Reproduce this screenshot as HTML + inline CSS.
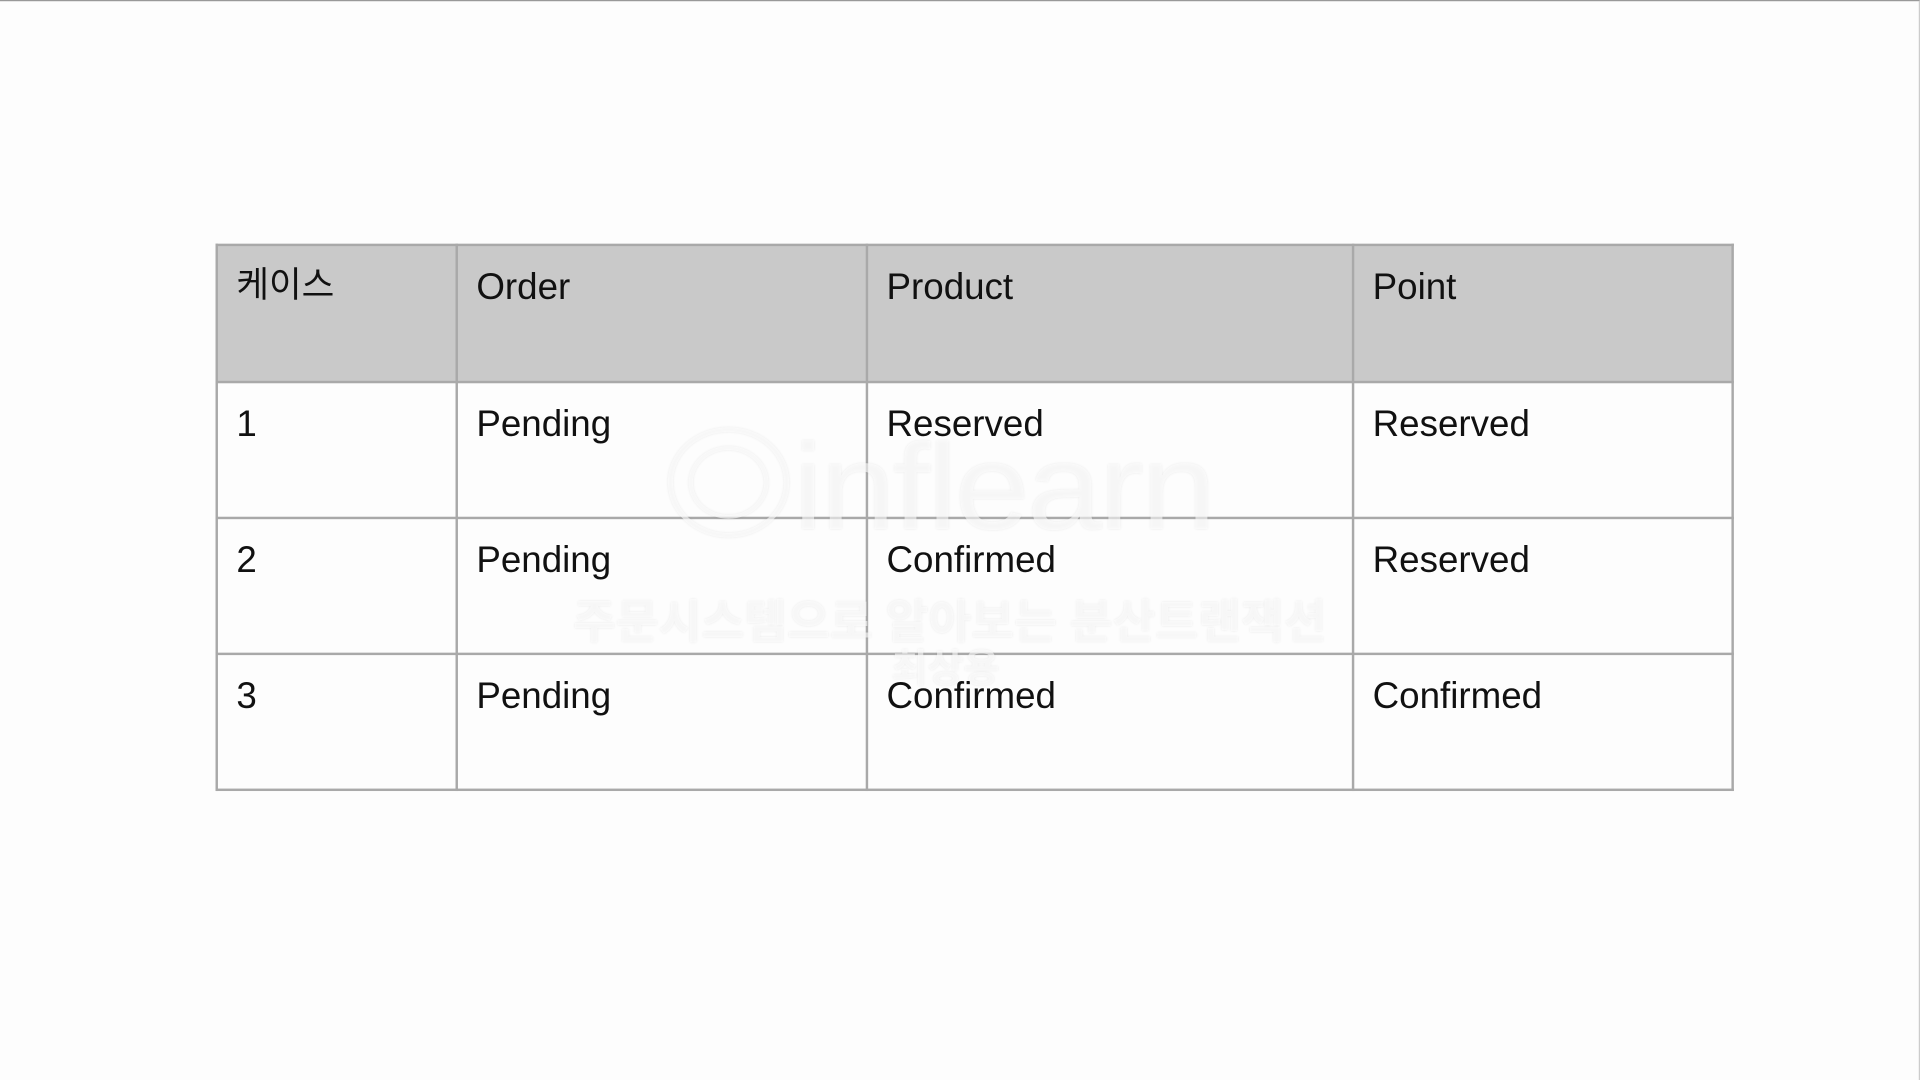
<!DOCTYPE html>
<html><head><meta charset="utf-8"><style>
html,body{margin:0;padding:0;background:#fdfdfd;overflow:hidden}
#s{position:absolute;left:0;top:0;width:1568px;height:882px;transform:scale(1.22449);transform-origin:0 0;background:#fdfdfd;border-top:1px solid #999;border-right:1px solid #ccc;box-sizing:border-box}
.c{position:absolute;box-sizing:border-box;font-family:"Liberation Sans","Noto Sans CJK KR",sans-serif;font-size:30px;color:#111;padding:18px 0 0 16px;line-height:34px}
.h{background:#c9c9c9}
.v{position:absolute;background:#a9a9a9}
.wm{position:absolute;font-family:"Liberation Sans","Noto Sans CJK KR",sans-serif;color:rgba(255,255,255,0.6);font-weight:bold;text-shadow:0 0 2px rgba(0,0,0,0.08);white-space:nowrap}
</style></head><body><div id="s">
<div class="c h" style="left:177px;top:199px;width:1238px;height:112px;padding:0"></div>
<div class="c" style="left:177px;top:199px;padding-top:16px;font-size:29px">케이스</div>
<div class="c" style="left:373px;top:199px">Order</div>
<div class="c" style="left:708px;top:199px">Product</div>
<div class="c" style="left:1105px;top:199px">Point</div>
<div class="c" style="left:177px;top:311px">1</div>
<div class="c" style="left:373px;top:311px">Pending</div>
<div class="c" style="left:708px;top:311px">Reserved</div>
<div class="c" style="left:1105px;top:311px">Reserved</div>
<div class="c" style="left:177px;top:422px">2</div>
<div class="c" style="left:373px;top:422px">Pending</div>
<div class="c" style="left:708px;top:422px">Confirmed</div>
<div class="c" style="left:1105px;top:422px">Reserved</div>
<div class="c" style="left:177px;top:533px">3</div>
<div class="c" style="left:373px;top:533px">Pending</div>
<div class="c" style="left:708px;top:533px">Confirmed</div>
<div class="c" style="left:1105px;top:533px">Confirmed</div>
<div class="v" style="left:176px;top:198px;width:1240px;height:2px"></div>
<div class="v" style="left:176px;top:310px;width:1240px;height:2px"></div>
<div class="v" style="left:176px;top:421px;width:1240px;height:2px"></div>
<div class="v" style="left:176px;top:532px;width:1240px;height:2px"></div>
<div class="v" style="left:176px;top:643px;width:1240px;height:2px"></div>
<div class="v" style="left:176px;top:198px;width:2px;height:447px"></div>
<div class="v" style="left:372px;top:198px;width:2px;height:447px"></div>
<div class="v" style="left:707px;top:198px;width:2px;height:447px"></div>
<div class="v" style="left:1104px;top:198px;width:2px;height:447px"></div>
<div class="v" style="left:1414px;top:198px;width:2px;height:447px"></div>
<div class="wm" style="left:540px;top:315px;font-size:100px;font-weight:normal;letter-spacing:-2px;transform:scaleX(1.1);transform-origin:0 0">◎inflearn</div>
<div class="wm" style="left:468px;top:476px;font-size:38px">주문시스템으로 알아보는 분산트랜잭션</div>
<div class="wm" style="left:728px;top:520px;font-size:32px">최상용</div>
</div></body></html>
